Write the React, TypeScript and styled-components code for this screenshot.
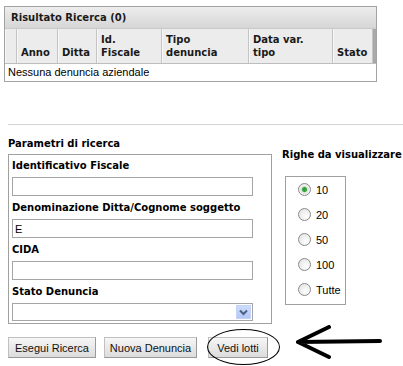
import styled, { createGlobalStyle } from 'styled-components'

const GlobalStyle = createGlobalStyle`
  body {
    margin: 0;
    background: #fff;
    color: #000;
    font-family: 'Liberation Sans', Arial, sans-serif;
    font-size: 11px;
  }
`

const Page = styled.div`
  width: 403px;
  height: 366px;
  box-sizing: border-box;
  padding: 6px 0 0 4px;
  overflow: hidden;
`

const bold = `
  font-family: 'DejaVu Sans', Verdana, sans-serif;
  font-weight: bold;
  font-size: 10px;
`

const Results = styled.div`
  width: 373px;
  box-sizing: border-box;
  border: 1px solid #a3a3a3;
`

const TitleBar = styled.div`
  ${bold};
  height: 21px;
  display: flex;
  align-items: center;
  padding-left: 6px;
  background: linear-gradient(#ededed, #d6d6d6);
  border-bottom: 1px solid #c9c9c9;
  color: #1a1a1a;
`

const HeadRow = styled.div`
  display: grid;
  grid-template-columns: 12px 41px 39px 65px 87px 84px 1fr 3px;
  height: 34px;
  background: #ececec;
  border-bottom: 1px solid #bdbdbd;
`

const HeadCell = styled.div`
  ${bold};
  display: flex;
  align-items: flex-end;
  padding: 0 4px 4px;
  line-height: 13px;
  white-space: pre;
  border-right: 1px solid #c4c4c4;
  box-shadow: inset 1px 0 #f7f7f7;
  color: #1a1a1a;
`

const Strip = styled.div`
  background: #a9a9a9;
`

const EmptyRow = styled.div`
  height: 17px;
  line-height: 17px;
  padding-left: 3px;
`

const Separator = styled.div`
  height: 1px;
  margin: 42px 0 0 4px;
  background: #d4d4d4;
`

const SearchArea = styled.div`
  display: flex;
  align-items: flex-start;
  padding-left: 4px;
`

const ParamsColumn = styled.div`
  padding-top: 12px;
`

const SectionTitle = styled.div`
  ${bold};
  line-height: 14px;
`

const ParamsBox = styled.div`
  width: 264px;
  height: 170px;
  box-sizing: border-box;
  margin-top: 3px;
  border: 1px solid #a0a0a0;
  padding-left: 3px;
  display: flex;
  flex-direction: column;
  gap: 1px;
`

const Field = styled.div`
  display: flex;
  flex-direction: column;
`

const FieldLabel = styled.div`
  ${bold};
  height: 22px;
  line-height: 22px;
`

const TextInput = styled.input`
  width: 241px;
  height: 19px;
  box-sizing: border-box;
  margin: 0;
  border: 1px solid #a5a5a5;
  padding: 0 2px;
  font-family: 'Liberation Sans', Arial, sans-serif;
  font-size: 11px;
  color: #000;
  outline: none;
`

const SelectBox = styled.div`
  width: 241px;
  height: 18px;
  box-sizing: border-box;
  border: 1px solid #a5a5a5;
  display: flex;
  justify-content: flex-end;
  align-items: center;
  padding-right: 1px;
`

const DropButton = styled.div`
  width: 15px;
  height: 14px;
  display: grid;
  place-items: center;
  background: linear-gradient(#cddcfb, #b3c8f5);
  border: 1px solid #c3d3fb;
  box-sizing: border-box;
`

const RowsColumn = styled.div`
  margin-left: 10px;
  padding-top: 23px;
`

const RadioBox = styled.div`
  width: 61px;
  box-sizing: border-box;
  margin: 14px 0 0 3px;
  padding: 0 0 2px 12px;
  border: 1px solid #a0a0a0;
`

const RadioRow = styled.label`
  display: flex;
  align-items: center;
  gap: 5px;
  height: 25px;
  font-size: 11px;
`

const RadioDot = styled.span<{ $checked?: boolean }>`
  width: 13px;
  height: 13px;
  box-sizing: border-box;
  border-radius: 50%;
  border: 1px solid #8a8a8a;
  background: ${(p) =>
    p.$checked
      ? 'radial-gradient(circle, #34a23a 0 2px, #8fd08f 2.6px, #e6e6e6 3.2px, #fbfbfb 100%)'
      : 'radial-gradient(circle at 65% 65%, #ffffff, #dedede)'};
`

const ButtonRow = styled.div`
  display: flex;
  align-items: flex-start;
  margin: 13px 0 0 4px;
`

const Button = styled.div<{ $width: number; $gap: number }>`
  width: ${(p) => p.$width}px;
  height: 21px;
  margin-right: ${(p) => p.$gap}px;
  box-sizing: border-box;
  display: grid;
  place-items: center;
  border: 1px solid #c0c0c0;
  border-right-color: #9a9a9a;
  border-bottom-color: #9a9a9a;
  background: linear-gradient(#f6f6f6, #dcdcdc);
  font-size: 11px;
  color: #111;
`

const Circled = styled.div`
  position: relative;

  &::after {
    content: '';
    position: absolute;
    left: -1px;
    right: 0;
    top: -8px;
    bottom: -7px;
    border: 1px solid #000;
    border-radius: 50%;
  }
`

const Arrow = styled.svg`
  margin: -12px 0 0 15px;
`

const columns = ['', 'Anno', 'Ditta', 'Id.\nFiscale', 'Tipo\ndenuncia', 'Data var.\ntipo', 'Stato']

const rowOptions = ['10', '20', '50', '100', 'Tutte']

export default function App() {
  return (
    <Page>
      <GlobalStyle />
      <Results>
        <TitleBar>Risultato Ricerca (0)</TitleBar>
        <HeadRow>
          {columns.map((c, i) => (
            <HeadCell key={i}>{c}</HeadCell>
          ))}
          <Strip />
        </HeadRow>
        <EmptyRow>Nessuna denuncia aziendale</EmptyRow>
      </Results>

      <Separator />

      <SearchArea>
        <ParamsColumn>
          <SectionTitle>Parametri di ricerca</SectionTitle>
          <ParamsBox>
            <Field>
              <FieldLabel>Identificativo Fiscale</FieldLabel>
              <TextInput defaultValue="" />
            </Field>
            <Field>
              <FieldLabel>Denominazione Ditta/Cognome soggetto</FieldLabel>
              <TextInput defaultValue="E" />
            </Field>
            <Field>
              <FieldLabel>CIDA</FieldLabel>
              <TextInput defaultValue="" />
            </Field>
            <Field>
              <FieldLabel>Stato Denuncia</FieldLabel>
              <SelectBox>
                <DropButton>
                  <svg width="9" height="7" viewBox="0 0 9 7">
                    <path d="M1 1.5 L4.5 5 L8 1.5" fill="none" stroke="#4d6185" strokeWidth="2" />
                  </svg>
                </DropButton>
              </SelectBox>
            </Field>
          </ParamsBox>
        </ParamsColumn>

        <RowsColumn>
          <SectionTitle>Righe da visualizzare</SectionTitle>
          <RadioBox>
            {rowOptions.map((o, i) => (
              <RadioRow key={o}>
                <RadioDot $checked={i === 0} />
                {o}
              </RadioRow>
            ))}
          </RadioBox>
        </RowsColumn>
      </SearchArea>

      <ButtonRow>
        <Button $width={88} $gap={8}>Esegui Ricerca</Button>
        <Button $width={93} $gap={11}>Nuova Denuncia</Button>
        <Circled>
          <Button $width={60} $gap={12}>Vedi lotti</Button>
        </Circled>
        <Arrow width="90" height="38" viewBox="0 0 90 38">
          <path
            d="M3 17 L85 16 M3 17 L34 2 M3 17 L34 32"
            fill="none"
            stroke="#000"
            strokeWidth="4"
            strokeLinecap="round"
            strokeLinejoin="round"
          />
        </Arrow>
      </ButtonRow>
    </Page>
  )
}
